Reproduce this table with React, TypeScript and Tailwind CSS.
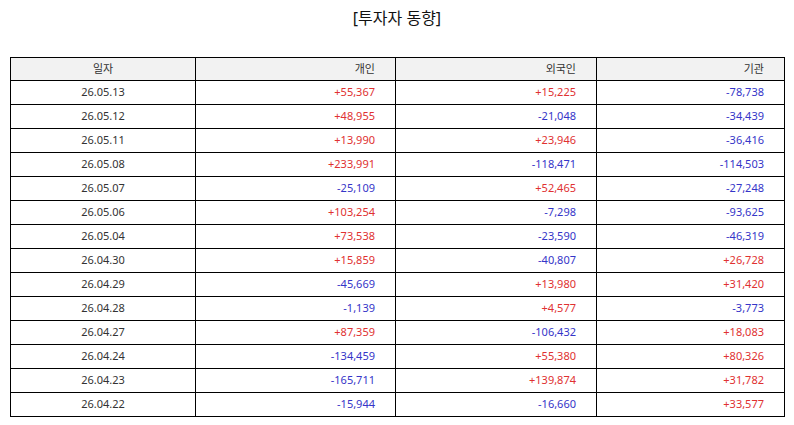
import React from "react";

const rows: [string, string, string, string][] = [
  ["26.05.13", "+55,367", "+15,225", "-78,738"],
  ["26.05.12", "+48,955", "-21,048", "-34,439"],
  ["26.05.11", "+13,990", "+23,946", "-36,416"],
  ["26.05.08", "+233,991", "-118,471", "-114,503"],
  ["26.05.07", "-25,109", "+52,465", "-27,248"],
  ["26.05.06", "+103,254", "-7,298", "-93,625"],
  ["26.05.04", "+73,538", "-23,590", "-46,319"],
  ["26.04.30", "+15,859", "-40,807", "+26,728"],
  ["26.04.29", "-45,669", "+13,980", "+31,420"],
  ["26.04.28", "-1,139", "+4,577", "-3,773"],
  ["26.04.27", "+87,359", "-106,432", "+18,083"],
  ["26.04.24", "-134,459", "+55,380", "+80,326"],
  ["26.04.23", "-165,711", "+139,874", "+31,782"],
  ["26.04.22", "-15,944", "-16,660", "+33,577"],
];

function Num({ v }: { v: string }) {
  const cls = v.startsWith("+") ? "text-[#e03131]" : "text-[#3535c8]";
  return <td className={`border border-black text-right pr-[20px] ${cls}`}>{v}</td>;
}

export default function App() {
  return (
    <div
      className="w-[794px] h-[425px] bg-white px-[10px] pt-[7px]"
      style={{ fontFamily: '"Noto Sans", "Noto Sans CJK KR", sans-serif' }}
    >
      <h1 className="text-center text-[16px] leading-[22px] text-[#111] mb-[28px]">[투자자 동향]</h1>
      <table className="w-[774px] border-collapse table-fixed text-[11px] text-[#333]">
        <colgroup>
          <col className="w-[185px]" />
          <col className="w-[200px]" />
          <col className="w-[201px]" />
          <col className="w-[188px]" />
        </colgroup>
        <thead>
          <tr className="h-[23px] bg-[#f2f2f2]">
            <th className="border border-black font-normal text-center">일자</th>
            <th className="border border-black font-normal text-right pr-[20px]">개인</th>
            <th className="border border-black font-normal text-right pr-[20px]">외국인</th>
            <th className="border border-black font-normal text-right pr-[20px]">기관</th>
          </tr>
        </thead>
        <tbody>
          {rows.map((r) => (
            <tr key={r[0]} className="h-[24px]">
              <td className="border border-black text-center">{r[0]}</td>
              <Num v={r[1]} />
              <Num v={r[2]} />
              <Num v={r[3]} />
            </tr>
          ))}
        </tbody>
      </table>
    </div>
  );
}
